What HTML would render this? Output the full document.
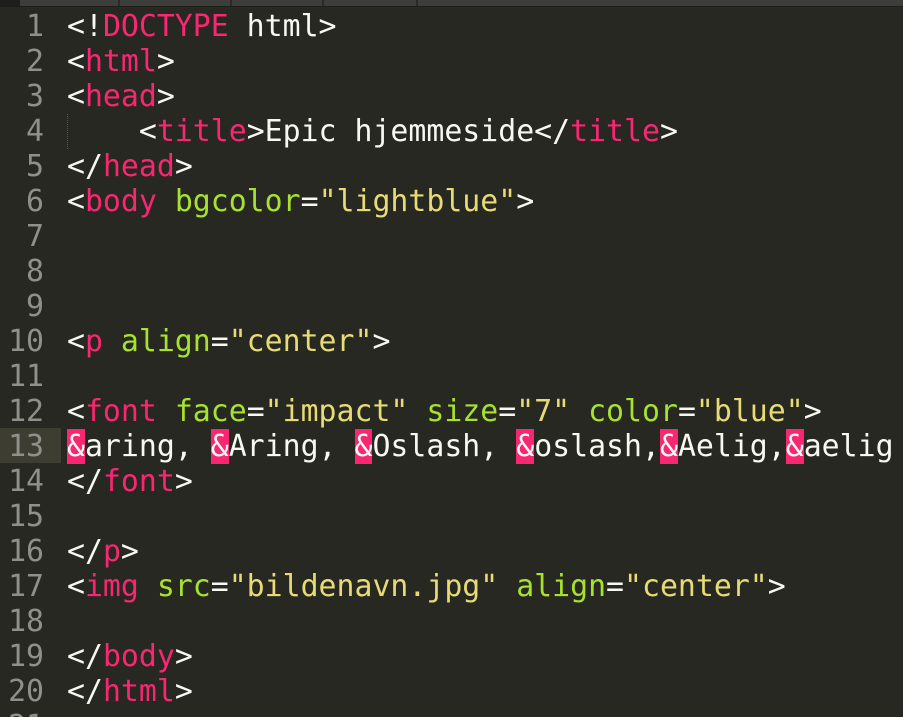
<!DOCTYPE html>
<html><head><style>
html,body{margin:0;width:903px;height:717px;overflow:hidden}
body{background:#272822;position:relative;font-family:"DejaVu Sans Mono","Liberation Mono",monospace;font-size:29.85px}
.top{position:absolute;left:0;top:0;width:903px;height:6px;background:#3d3d3b;border-bottom:1px solid #1e1f1b}
.top i{position:absolute;top:0;width:2px;height:6px;background:#2a2a28}
.w{position:absolute;left:0;top:-1px;width:903px;height:720px}
.ln{position:absolute;left:0;width:44px;text-align:right;color:#8f908a;height:35px;line-height:35px}
.hl{position:absolute;left:0;top:428px;width:61px;height:35px;background:#3e3d32}
.c{position:absolute;left:67px;height:35px;line-height:35px;color:#f8f8f2;white-space:pre}
.p{color:#f92672}.g{color:#a6e22e}.y{color:#e6db74}
.amp{background:#f92672;color:#f8f8f2}
.guide{position:absolute;left:67px;top:115px;height:35px;border-left:1px dotted #555}
</style></head><body>
<div class="top"><i style="left:118px"></i><i style="left:230px"></i><i style="left:322px"></i><i style="left:416px"></i></div>
<div style="position:absolute;left:0;top:0;width:20px;height:6px;background:#1e1f1b"></div>
<div class="hl"></div>
<div class="w">
<div class="guide"></div>
<div class="ln" style="top:10px">1</div><div class="ln" style="top:45px">2</div><div class="ln" style="top:80px">3</div><div class="ln" style="top:115px">4</div><div class="ln" style="top:150px">5</div><div class="ln" style="top:185px">6</div><div class="ln" style="top:220px">7</div><div class="ln" style="top:255px">8</div><div class="ln" style="top:290px">9</div><div class="ln" style="top:325px">10</div><div class="ln" style="top:360px">11</div><div class="ln" style="top:395px">12</div><div class="ln" style="top:430px">13</div><div class="ln" style="top:465px">14</div><div class="ln" style="top:500px">15</div><div class="ln" style="top:535px">16</div><div class="ln" style="top:570px">17</div><div class="ln" style="top:605px">18</div><div class="ln" style="top:640px">19</div><div class="ln" style="top:675px">20</div><div class="ln" style="top:710px">21</div>
<div class="c" style="top:10px">&lt;!<span class="p">DOCTYPE</span> html&gt;</div>
<div class="c" style="top:45px">&lt;<span class="p">html</span>&gt;</div>
<div class="c" style="top:80px">&lt;<span class="p">head</span>&gt;</div>
<div class="c" style="top:115px">    &lt;<span class="p">title</span>&gt;Epic hjemmeside&lt;/<span class="p">title</span>&gt;</div>
<div class="c" style="top:150px">&lt;/<span class="p">head</span>&gt;</div>
<div class="c" style="top:185px">&lt;<span class="p">body</span> <span class="g">bgcolor</span>=<span class="y">"lightblue"</span>&gt;</div>
<div class="c" style="top:325px">&lt;<span class="p">p</span> <span class="g">align</span>=<span class="y">"center"</span>&gt;</div>
<div class="c" style="top:395px">&lt;<span class="p">font</span> <span class="g">face</span>=<span class="y">"impact"</span> <span class="g">size</span>=<span class="y">"7"</span> <span class="g">color</span>=<span class="y">"blue"</span>&gt;</div>
<div class="c" style="top:430px"><span class="amp">&amp;</span>aring, <span class="amp">&amp;</span>Aring, <span class="amp">&amp;</span>Oslash, <span class="amp">&amp;</span>oslash,<span class="amp">&amp;</span>Aelig,<span class="amp">&amp;</span>aelig</div>
<div class="c" style="top:465px">&lt;/<span class="p">font</span>&gt;</div>
<div class="c" style="top:535px">&lt;/<span class="p">p</span>&gt;</div>
<div class="c" style="top:570px">&lt;<span class="p">img</span> <span class="g">src</span>=<span class="y">"bildenavn.jpg"</span> <span class="g">align</span>=<span class="y">"center"</span>&gt;</div>
<div class="c" style="top:640px">&lt;/<span class="p">body</span>&gt;</div>
<div class="c" style="top:675px">&lt;/<span class="p">html</span>&gt;</div>
</div>
</body></html>
